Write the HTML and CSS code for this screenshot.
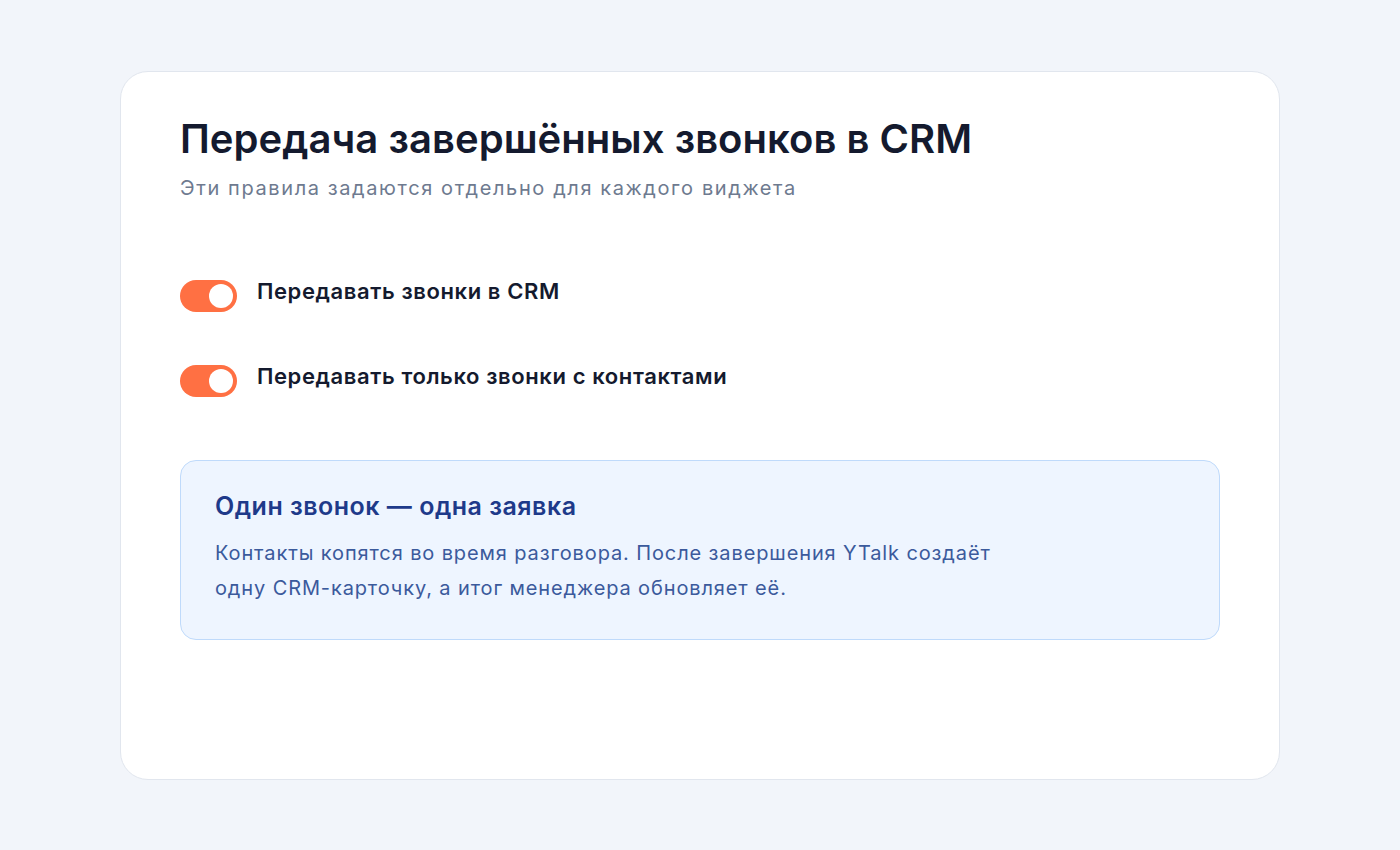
FILE: index.html
```html
<!DOCTYPE html>
<html lang="ru">
<head>
    <meta charset="UTF-8">
    <meta name="viewport" content="width=device-width, initial-scale=1.0">
    <title>Передача звонков в CRM</title>
    <link rel="stylesheet" href="styles.css">
</head>
<body>
    <div class="card">
        <h1 class="title">Передача завершённых звонков в CRM</h1>
        <p class="subtitle">Эти правила задаются отдельно для каждого виджета</p>

        <div class="options">
            <label class="option">
                <span class="switch on"><span class="knob"></span></span>
                <span class="option-label">Передавать звонки в CRM</span>
            </label>
            <label class="option">
                <span class="switch on"><span class="knob"></span></span>
                <span class="option-label">Передавать только звонки с контактами</span>
            </label>
        </div>

        <div class="note">
            <h2 class="note-title">Один звонок — одна заявка</h2>
            <p class="note-text">Контакты копятся во время разговора. После завершения YTalk создаёт одну CRM-карточку, а итог менеджера обновляет её.</p>
        </div>
    </div>
</body>
</html>
```

FILE: styles.css
```css
* {
    box-sizing: border-box;
}

body {
    margin: 0;
    height: 100vh;
    display: flex;
    justify-content: center;
    align-items: center;
    background: #f2f5fa;
    font-family: 'Inter', 'Noto Sans', sans-serif;
    color: #141a2e;
}

.card {
    width: 1160px;
    min-height: 709px;
    background: #fff;
    border: 1px solid #e1e6ee;
    border-radius: 28px;
    padding: 43px 59px;
}

.title {
    font-size: 40px;
    line-height: 48px;
    font-weight: 600;
    letter-spacing: 0.05px;
    margin: 0;
}

.subtitle {
    font-size: 20px;
    line-height: 28px;
    letter-spacing: 1.6px;
    color: #6e7a8f;
    margin: 11px 0 0;
}

.options {
    display: flex;
    flex-direction: column;
    gap: 53px;
    margin-top: 78px;
}

.option {
    display: flex;
    align-items: center;
    gap: 20px;
    cursor: pointer;
}

.switch {
    position: relative;
    width: 57px;
    height: 32px;
    border-radius: 16px;
    background: #cbd2dc;
    flex-shrink: 0;
}

.switch.on {
    background: #ff7043;
}

.knob {
    position: absolute;
    top: 4px;
    left: 4px;
    width: 24px;
    height: 24px;
    border-radius: 50%;
    background: #fff;
}

.switch.on .knob {
    left: 29px;
}

.option-label {
    font-size: 22px;
    font-weight: 600;
    line-height: 28px;
    letter-spacing: 0.6px;
    margin-top: -10px;
}

.note {
    margin-top: 63px;
    background: #eef5ff;
    border: 1px solid #bfdafb;
    border-radius: 16px;
    padding: 29px 34px 33px;
}

.note-title {
    margin: 0;
    font-size: 25px;
    line-height: 32px;
    font-weight: 600;
    letter-spacing: 0.5px;
    color: #1e3a8a;
}

.note-text {
    margin: 14px 0 0;
    max-width: 800px;
    font-size: 20px;
    line-height: 35px;
    letter-spacing: 0.88px;
    color: #3b5a9c;
}
```
